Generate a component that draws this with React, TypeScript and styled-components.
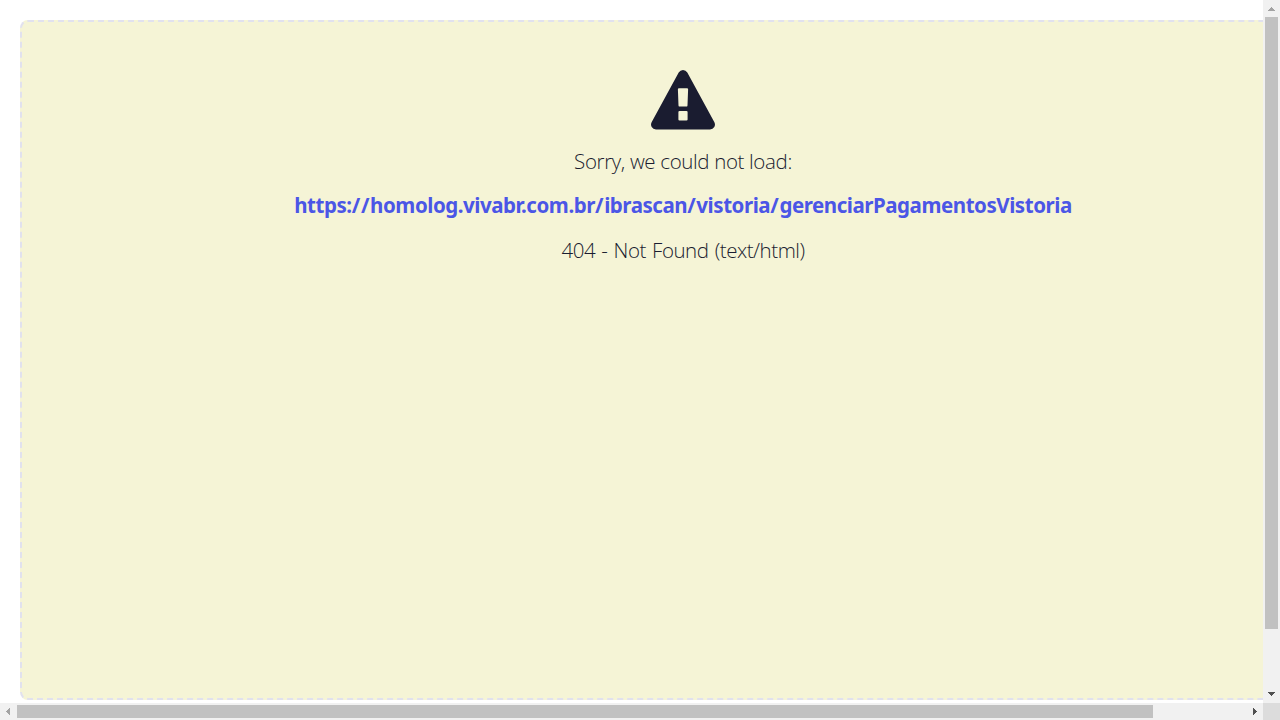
import React from "react";
import styled, { createGlobalStyle } from "styled-components";

const GlobalStyle = createGlobalStyle`
  html, body { margin: 0; padding: 0; overflow: hidden; background: #fff; }
  * { box-sizing: border-box; }
`;

const Window = styled.div`
  display: grid;
  grid-template-columns: 1263px 17px;
  grid-template-rows: 703px 17px;
  width: 1280px;
  height: 720px;
  overflow: hidden;
`;

const Viewport = styled.main`
  overflow: hidden;
  padding: 20px;
  background: #fff;
`;

const ErrorPanel = styled.section`
  display: flex;
  flex-direction: column;
  align-items: center;
  width: 1326px;
  height: 680px;
  padding-top: 48px;
  border: 2px dashed #e1e1ee;
  border-radius: 8px;
  background: #f5f4d6;
  color: #1a1c30;
  font-family: "Open Sans", "Noto Sans", sans-serif;
`;

const WarningIcon = styled.svg`
  display: block;
  width: 64px;
  height: 60px;
  margin-bottom: 16px;
`;

const Message = styled.p<{ $spacing: number; $wordSpacing?: number }>`
  margin: 0 0 14px;
  font-size: 20.5px;
  font-weight: 300;
  line-height: 30px;
  letter-spacing: ${(p) => p.$spacing}px;
  word-spacing: ${(p) => p.$wordSpacing ?? 0}px;
  white-space: nowrap;
`;

const Address = styled(Message)`
  margin-bottom: 15px;
  color: #4b56e6;
  font-family: "Noto Sans", "Open Sans", sans-serif;
  font-weight: 700;
`;

const Slash = styled.span`
  letter-spacing: 0.7px;
`;

const ScrollTrack = styled.div<{ $vertical?: boolean }>`
  display: flex;
  flex-direction: ${(p) => (p.$vertical ? "column" : "row")};
  justify-content: space-between;
  align-items: center;
  background: #f1f1f1;
`;

const Thumb = styled.div<{ $vertical?: boolean }>`
  width: ${(p) => (p.$vertical ? "13px" : "1136px")};
  height: ${(p) => (p.$vertical ? "612px" : "13px")};
  margin: ${(p) => (p.$vertical ? "0 0 auto" : "0 auto 0 0")};
  background: #c1c1c1;
`;

const Arrow = styled.svg`
  display: block;
  flex: none;
  width: 17px;
  height: 17px;
`;

const Corner = styled.div`
  background: #dcdcdc;
`;

export default function App() {
  return (
    <>
      <GlobalStyle />
      <Window>
        <Viewport>
          <ErrorPanel>
            <WarningIcon viewBox="0 0 64 60" aria-hidden="true">
              <path
                fill="#1a1c30"
                fillRule="evenodd"
                d="M27.7 2.5Q29.2 0 32 0T36.3 2.5L63.4 52.2Q64.6 54.6 63.3 57Q61.9 59.4 59 59.4H5Q2.1 59.4.7 57Q-.6 54.6.6 52.2ZM28 18.2Q26.8 18.2 26.9 19.4L27.5 35.4Q27.6 36.6 28.8 36.6H35.2Q36.4 36.6 36.5 35.4L37.1 19.4Q37.2 18.2 36 18.2ZM28.5 41Q27.4 41 27.4 42.1V49.5Q27.4 50.6 28.5 50.6H35.5Q36.6 50.6 36.6 49.5V42.1Q36.6 41 35.5 41Z"
              />
            </WarningIcon>
            <Message $spacing={-0.35}>Sorry, we could not load:</Message>
            <Address $spacing={-0.45}>
              https:<Slash>//</Slash>homolog.vivabr.com.br<Slash>/</Slash>ibrascan
              <Slash>/</Slash>vistoria<Slash>/</Slash>gerenciarPagamentosVistoria
            </Address>
            <Message $spacing={-0.46} $wordSpacing={1.3}>
              404 - Not Found (text/html)
            </Message>
          </ErrorPanel>
        </Viewport>
        <ScrollTrack $vertical>
          <Arrow viewBox="0 0 17 17" shapeRendering="crispEdges">
            <path fill="#a3a3a3" d="M8 7h1v1h1v1h1v1h1v1H5v-1h1V9h1V8h1z" />
          </Arrow>
          <Thumb $vertical />
          <Arrow viewBox="0 0 17 17" shapeRendering="crispEdges">
            <path fill="#505050" d="M5 6h7v1h-1v1h-1v1H9v1H8V9H7V8H6V7H5z" />
          </Arrow>
        </ScrollTrack>
        <ScrollTrack>
          <Arrow viewBox="0 0 17 17" shapeRendering="crispEdges">
            <path fill="#a3a3a3" d="M6 8h1V7h1V6h1V5h1v7H9v-1H8v-1H7V9H6z" />
          </Arrow>
          <Thumb />
          <Arrow viewBox="0 0 17 17" shapeRendering="crispEdges">
            <path fill="#505050" d="M7 5h1v1h1v1h1v1h1v1h-1v1H9v1H8v1H7z" />
          </Arrow>
        </ScrollTrack>
        <Corner />
      </Window>
    </>
  );
}
